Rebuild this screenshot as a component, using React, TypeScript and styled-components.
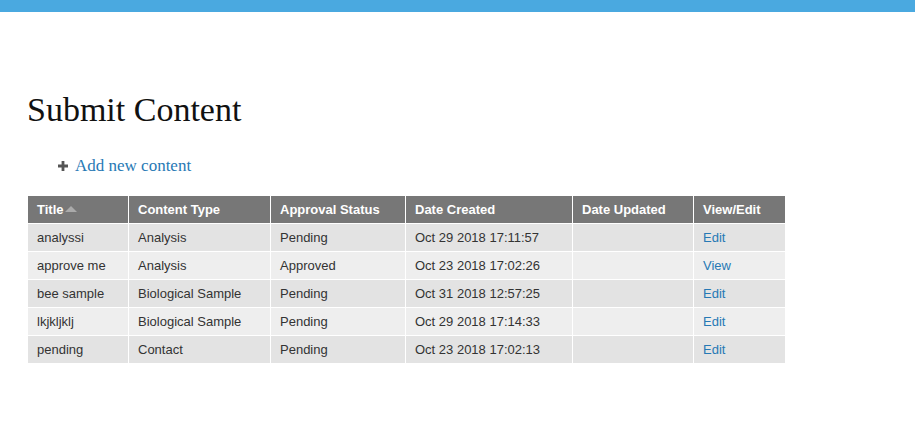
import React from "react";
import styled, {createGlobalStyle} from "styled-components";

const GlobalStyle = createGlobalStyle`
  body {
    margin: 0;
    background: #fff;
    font-family: "Liberation Sans", Arial, sans-serif;
  }
`;

const TopBar = styled.div`
  height: 12px;
  background-color: #4aa9e0;
`;

const Main = styled.main`
  padding: 78px 28px 0 27px;
`;

const Heading = styled.h1`
  margin: 0;
  font-family: "Liberation Serif", "Times New Roman", serif;
  font-weight: normal;
  font-size: 34px;
  line-height: 40px;
  color: #111;
`;

const AddLink = styled.a`
  display: inline-flex;
  align-items: center;
  gap: 7px;
  margin: 26px 0 0 31px;
  font-family: "Liberation Serif", "Times New Roman", serif;
  font-size: 17px;
  color: #2779b5;
  text-decoration: none;
`;

const Table = styled.table`
  margin-top: 20px;
  border-collapse: collapse;
  font-size: 13px;
`;

const HeadCell = styled.th<{ $w: number }>`
  width: ${p => p.$w}px;
  box-sizing: border-box;
  height: 27px;
  padding: 0 9px;
  text-align: left;
  background: #777;
  color: #fff;
  font-weight: bold;
  border: 1px solid #fff;
  border-top: none;
`;

const Row = styled.tr<{ $odd: boolean }>`
  background: ${p => (p.$odd ? "#eeeeee" : "#e3e3e3")};
`;

const Cell = styled.td`
  height: 28px;
  box-sizing: border-box;
  padding: 0 9px;
  color: #333;
  border: 1px solid #fff;
  border-bottom: none;
`;

const EditLink = styled.a`
  color: #2779b5;
  text-decoration: none;
`;

const SortArrow = styled.span`
  display: inline-block;
  width: 0;
  height: 0;
  margin-left: 1px;
  border-left: 6px solid transparent;
  border-right: 6px solid transparent;
  border-bottom: 6px solid #aaa;
  vertical-align: 2px;
`;

const Plus = () => (
    <svg width="10" height="10" viewBox="0 0 10 10">
        <path d="M3.6 0h2.8v3.6H10v2.8H6.4V10H3.6V6.4H0V3.6h3.6z" fill="#555"/>
    </svg>
);

const columns = [
    {label: "Title", w: 101},
    {label: "Content Type", w: 142},
    {label: "Approval Status", w: 135},
    {label: "Date Created", w: 167},
    {label: "Date Updated", w: 121},
    {label: "View/Edit", w: 92},
];

const rows = [
    ["analyssi", "Analysis", "Pending", "Oct 29 2018 17:11:57", "", "Edit"],
    ["approve me", "Analysis", "Approved", "Oct 23 2018 17:02:26", "", "View"],
    ["bee sample", "Biological Sample", "Pending", "Oct 31 2018 12:57:25", "", "Edit"],
    ["lkjkljklj", "Biological Sample", "Pending", "Oct 29 2018 17:14:33", "", "Edit"],
    ["pending", "Contact", "Pending", "Oct 23 2018 17:02:13", "", "Edit"],
];

const App: React.FC = () => {
    return (
        <>
            <GlobalStyle/>
            <TopBar/>
            <Main>
                <Heading>Submit Content</Heading>
                <AddLink href="#"><Plus/>Add new content</AddLink>
                <Table>
                    <thead>
                    <tr>
                        {columns.map(c => (
                            <HeadCell key={c.label} $w={c.w}>
                                {c.label}
                                {c.label === "Title" && <SortArrow/>}
                            </HeadCell>
                        ))}
                    </tr>
                    </thead>
                    <tbody>
                    {rows.map((r, i) => (
                        <Row key={r[0]} $odd={i % 2 === 1}>
                            {r.map((v, j) => (
                                <Cell key={j}>
                                    {j === 5 ? <EditLink href="#">{v}</EditLink> : v}
                                </Cell>
                            ))}
                        </Row>
                    ))}
                    </tbody>
                </Table>
            </Main>
        </>
    );
};

export default App;
